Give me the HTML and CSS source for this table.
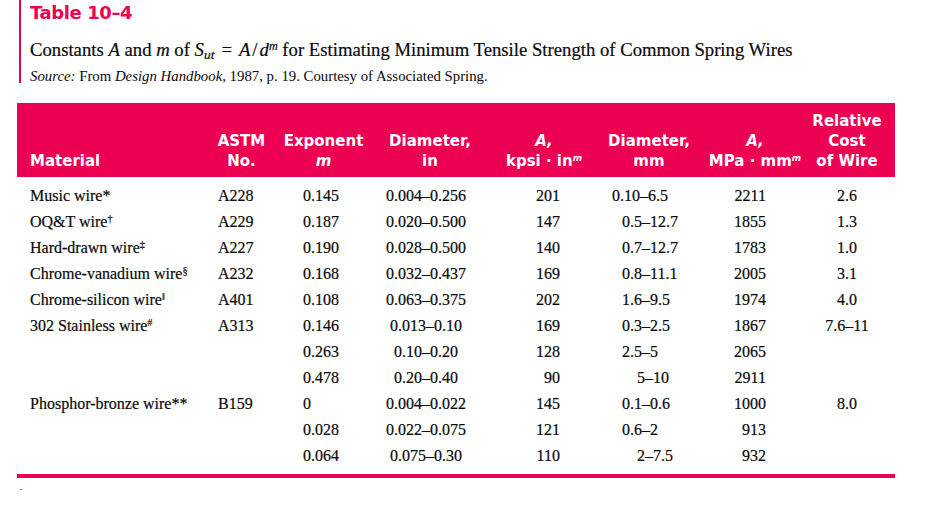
FILE: index.html
```html
<!DOCTYPE html>
<html lang="en">
<head>
<meta charset="utf-8">
<title>Table 10–4</title>
<link rel="stylesheet" href="styles.css">
</head>
<body>
<div class="page">
  <header class="caption">
    <h1 class="title">Table 10–4</h1>
    <p class="subtitle">Constants <i>A</i> and <i>m</i> of <i>S</i><sub><i>ut</i></sub><span class="op">=</span><i>A</i><span class="slash">/</span><i>d</i><sup><i>m</i></sup> for Estimating Minimum Tensile Strength of Common Spring Wires</p>
    <p class="source"><i>Source:</i> From <i>Design Handbook</i>, 1987, p. 19. Courtesy of Associated Spring.</p>
  </header>
  <table class="data">
    <colgroup>
      <col class="w-mat"><col class="w-astm"><col class="w-exp"><col class="w-din"><col class="w-akpsi"><col class="w-dmm"><col class="w-ampa"><col class="w-cost">
    </colgroup>
    <thead>
      <tr>
        <th class="h-mat">Material</th>
        <th>ASTM<br>No.</th>
        <th>Exponent<br><i>m</i></th>
        <th>Diameter,<br>in</th>
        <th><i>A,</i><br>kpsi · in<sup><i>m</i></sup></th>
        <th>Diameter,<br>mm</th>
        <th><i>A,</i><br>MPa · mm<sup><i>m</i></sup></th>
        <th class="h-cost">Relative<br>Cost<br>of Wire</th>
      </tr>
    </thead>
    <tbody>
      <tr><td>Music wire*</td><td>A228</td><td>0.145</td><td>0.004–0.256</td><td>201</td><td class="wide">0.10–6.5</td><td>2211</td><td>2.6</td></tr>
      <tr><td>OQ&amp;T wire<sup>†</sup></td><td>A229</td><td>0.187</td><td>0.020–0.500</td><td>147</td><td>0.5–12.7</td><td>1855</td><td>1.3</td></tr>
      <tr><td>Hard-drawn wire<sup>‡</sup></td><td>A227</td><td>0.190</td><td>0.028–0.500</td><td>140</td><td>0.7–12.7</td><td>1783</td><td>1.0</td></tr>
      <tr><td>Chrome-vanadium wire<sup>§</sup></td><td>A232</td><td>0.168</td><td>0.032–0.437</td><td>169</td><td>0.8–11.1</td><td>2005</td><td>3.1</td></tr>
      <tr><td>Chrome-silicon wire<sup>‖</sup></td><td>A401</td><td>0.108</td><td>0.063–0.375</td><td>202</td><td>1.6–9.5</td><td>1974</td><td>4.0</td></tr>
      <tr><td>302 Stainless wire<sup>#</sup></td><td>A313</td><td>0.146</td><td>0.013–0.10</td><td>169</td><td>0.3–2.5</td><td>1867</td><td>7.6–11</td></tr>
      <tr><td></td><td></td><td>0.263</td><td>0.10–0.20</td><td>128</td><td>2.5–5</td><td>2065</td><td></td></tr>
      <tr><td></td><td></td><td>0.478</td><td>0.20–0.40</td><td>90</td><td class="narrow">5–10</td><td>2911</td><td></td></tr>
      <tr><td>Phosphor-bronze wire**</td><td>B159</td><td>0</td><td>0.004–0.022</td><td>145</td><td>0.1–0.6</td><td>1000</td><td>8.0</td></tr>
      <tr><td></td><td></td><td>0.028</td><td>0.022–0.075</td><td>121</td><td>0.6–2</td><td>913</td><td></td></tr>
      <tr><td></td><td></td><td>0.064</td><td>0.075–0.30</td><td>110</td><td class="narrow">2–7.5</td><td>932</td><td></td></tr>
    </tbody>
  </table>
  <div class="mark"></div>
</div>
</body>
</html>
```

FILE: styles.css
```css
html, body {
  margin: 0;
  padding: 0;
  background: #ffffff;
}

.page {
  padding-left: 17px;
  width: 878px;
  color: #0a0a0a;
  font-family: "Liberation Serif", "Times New Roman", serif;
}

.caption {
  margin-left: 2px;
  border-left: 2px solid #ec0052;
  padding: 2px 0 0 9px;
}

.title {
  margin: 0;
  font-family: "DejaVu Sans", sans-serif;
  font-weight: bold;
  font-size: 18px;
  line-height: 22px;
  color: #ec0052;
  letter-spacing: -0.4px;
}

.subtitle {
  margin: 15px 0 0;
  font-size: 18.7px;
  line-height: 22px;
  white-space: nowrap;
  -webkit-text-stroke: 0.2px #0a0a0a;
}

.subtitle .op {
  margin: 0 7px;
}

.subtitle .slash {
  margin: 0 2px;
}

.subtitle sub {
  font-size: 0.72em;
  line-height: 0;
  vertical-align: -0.25em;
}

.subtitle sup,
.data sup {
  font-size: 0.65em;
  line-height: 0;
  vertical-align: 0.5em;
}

.source {
  margin: 8px 0 0;
  font-size: 14.8px;
  line-height: 14px;
  white-space: nowrap;
}

.data {
  margin-top: 20px;
  width: 878px;
  table-layout: fixed;
  border-collapse: collapse;
  border-spacing: 0;
}

.w-mat { width: 191px; }
.w-astm { width: 67px; }
.w-exp { width: 97px; }
.w-din { width: 116px; }
.w-akpsi { width: 112px; }
.w-dmm { width: 98px; }
.w-ampa { width: 114px; }
.w-cost { width: 83px; }

.data th {
  background: #ec0052;
  color: #ffffff;
  font-family: "DejaVu Sans", sans-serif;
  font-weight: bold;
  font-size: 15px;
  line-height: 20px;
  padding: 8px 0 6px;
  text-align: center;
  vertical-align: bottom;
  white-space: nowrap;
}

.data th sup {
  font-size: 0.6em;
  vertical-align: 0.6em;
}

.data th.h-mat {
  text-align: left;
  padding-left: 13px;
}

.data th.h-cost {
  padding-right: 13px;
}

.data td {
  padding: 0;
  font-size: 16px;
  line-height: 26px;
  white-space: nowrap;
  color: #0a0a0a;
  -webkit-text-stroke: 0.2px #0a0a0a;
}

.data tbody tr:first-child td {
  padding-top: 6px;
}

.data tbody tr:last-child td {
  padding-bottom: 5px;
  border-bottom: 4px solid #ec0052;
}

.data td:nth-child(1) { padding-left: 13px; }
.data td:nth-child(2) { padding-left: 10px; }
.data td:nth-child(3) { padding-left: 28px; }
.data td:nth-child(4) { text-align: center; padding-right: 8px; }
.data td:nth-child(5) { text-align: right; padding-right: 40px; }
.data td:nth-child(6) { padding-left: 22px; }
.data td:nth-child(6).wide { padding-left: 12px; }
.data td:nth-child(6).narrow { padding-left: 37px; }
.data td:nth-child(7) { text-align: right; padding-right: 46px; }
.data td:nth-child(8) { text-align: center; padding-right: 13px; }

.mark {
  margin: 11px 0 0 3px;
  width: 2px;
  height: 1px;
  background: #888888;
}
```
